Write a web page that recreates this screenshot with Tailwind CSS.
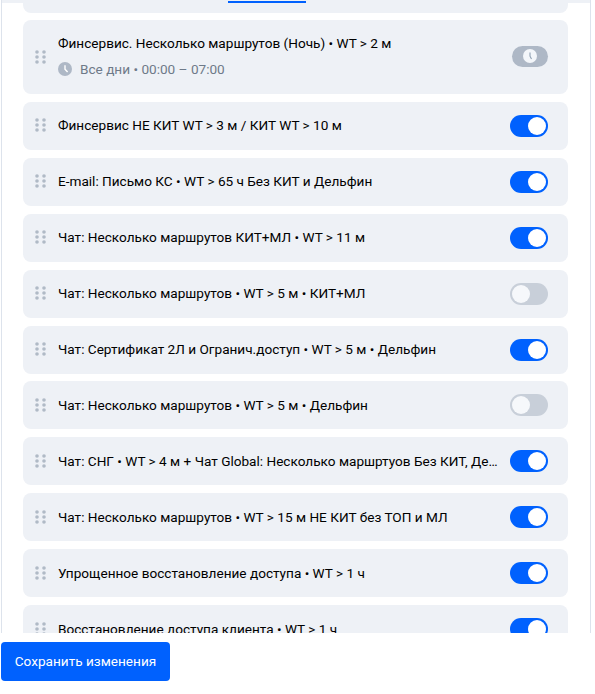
<!DOCTYPE html>
<html><head><meta charset="utf-8"><script src="https://cdn.jsdelivr.net/npm/@tailwindcss/browser@4"></script></head>
<body class="bg-white font-['Roboto',sans-serif] w-[595px] h-[694px] overflow-hidden">
<div class="h-[633px] overflow-hidden ml-px mr-1 border-x border-[#dde3ec] flex flex-col">
  <div class="relative h-[3px] shrink-0 bg-[#eef1f6]"><div class="absolute left-[226px] top-[1px] w-[78px] h-[2px] bg-[#0061fe]"></div></div>
  <div class="flex flex-col gap-2 pl-[21px] pr-[22px]">
    <div class="h-[10px] -mb-[1px] rounded-b-lg bg-[#eef1f6]"></div>

    <div class="h-[74px] rounded-lg bg-[#eef1f6] flex items-center pl-[12px] pr-5">
      <svg class="w-[11px] h-[14px] text-[#b0bac6] shrink-0 mr-3" viewBox="0 0 11 14" fill="currentColor"><circle cx="2" cy="2" r="1.8"/><circle cx="9" cy="2" r="1.8"/><circle cx="2" cy="7" r="1.8"/><circle cx="9" cy="7" r="1.8"/><circle cx="2" cy="12" r="1.8"/><circle cx="9" cy="12" r="1.8"/></svg>
      <div class="flex-1 min-w-0 flex flex-col gap-2 -mt-[2px]">
        <div class="text-[13.6px] leading-[18px] font-[450] text-black truncate">Финсервис. Несколько маршрутов (Ночь) • WT &gt; 2 м</div>
        <div class="flex items-center gap-2 text-[13.6px] leading-[18px] text-[#6e7a89]">
          <svg class="w-[14px] h-[14px] shrink-0" viewBox="0 0 14 14"><circle cx="7" cy="7" r="7" fill="#aeb8c6"/><path d="M7 3.2V7.2L9.6 10" stroke="#fff" stroke-width="1.4" fill="none"/></svg>
          <span>Все дни • 00:00 – 07:00</span>
        </div>
      </div>
      <div class="ml-[7px] w-9 h-[21px] -mt-[2px] rounded-full bg-[#aeb8c6] flex items-center justify-center">
        <svg class="w-[14px] h-[14px]" viewBox="0 0 14 14"><circle cx="7" cy="7" r="7" fill="#f3f6fa"/><path d="M7 3.5V7.2L8.5 10" stroke="#8fa0b2" stroke-width="1.1" fill="none"/></svg>
      </div>
    </div>

    <div class="h-[48px] rounded-lg bg-[#eef1f6] flex items-center pl-[12px] pr-5">
      <svg class="w-[11px] h-[14px] text-[#b0bac6] shrink-0 mr-3 -mt-[2px]" viewBox="0 0 11 14" fill="currentColor"><circle cx="2" cy="2" r="1.8"/><circle cx="9" cy="2" r="1.8"/><circle cx="2" cy="7" r="1.8"/><circle cx="9" cy="7" r="1.8"/><circle cx="2" cy="12" r="1.8"/><circle cx="9" cy="12" r="1.8"/></svg>
      <div class="flex-1 min-w-0 -mt-[2px] text-[13.6px] leading-[18px] font-[450] text-black truncate">Финсервис НЕ КИТ WT &gt; 3 м / КИТ WT &gt; 10 м</div>
      <div class="ml-[7px] shrink-0 w-[38px] h-[22px] rounded-full bg-[#0061fe] flex items-center justify-end p-[2px]"><div class="w-[18px] h-[18px] rounded-full bg-white"></div></div>
    </div>

    <div class="h-[48px] rounded-lg bg-[#eef1f6] flex items-center pl-[12px] pr-5">
      <svg class="w-[11px] h-[14px] text-[#b0bac6] shrink-0 mr-3 -mt-[2px]" viewBox="0 0 11 14" fill="currentColor"><circle cx="2" cy="2" r="1.8"/><circle cx="9" cy="2" r="1.8"/><circle cx="2" cy="7" r="1.8"/><circle cx="9" cy="7" r="1.8"/><circle cx="2" cy="12" r="1.8"/><circle cx="9" cy="12" r="1.8"/></svg>
      <div class="flex-1 min-w-0 -mt-[2px] text-[13.6px] leading-[18px] font-[450] text-black truncate">E-mail: Письмо КС • WT &gt; 65 ч Без КИТ и Дельфин</div>
      <div class="ml-[7px] shrink-0 w-[38px] h-[22px] rounded-full bg-[#0061fe] flex items-center justify-end p-[2px]"><div class="w-[18px] h-[18px] rounded-full bg-white"></div></div>
    </div>

    <div class="h-[48px] rounded-lg bg-[#eef1f6] flex items-center pl-[12px] pr-5">
      <svg class="w-[11px] h-[14px] text-[#b0bac6] shrink-0 mr-3 -mt-[2px]" viewBox="0 0 11 14" fill="currentColor"><circle cx="2" cy="2" r="1.8"/><circle cx="9" cy="2" r="1.8"/><circle cx="2" cy="7" r="1.8"/><circle cx="9" cy="7" r="1.8"/><circle cx="2" cy="12" r="1.8"/><circle cx="9" cy="12" r="1.8"/></svg>
      <div class="flex-1 min-w-0 -mt-[2px] text-[13.6px] leading-[18px] font-[450] text-black truncate">Чат: Несколько маршрутов КИТ+МЛ • WT &gt; 11 м</div>
      <div class="ml-[7px] shrink-0 w-[38px] h-[22px] rounded-full bg-[#0061fe] flex items-center justify-end p-[2px]"><div class="w-[18px] h-[18px] rounded-full bg-white"></div></div>
    </div>

    <div class="h-[48px] rounded-lg bg-[#eef1f6] flex items-center pl-[12px] pr-5">
      <svg class="w-[11px] h-[14px] text-[#b0bac6] shrink-0 mr-3 -mt-[2px]" viewBox="0 0 11 14" fill="currentColor"><circle cx="2" cy="2" r="1.8"/><circle cx="9" cy="2" r="1.8"/><circle cx="2" cy="7" r="1.8"/><circle cx="9" cy="7" r="1.8"/><circle cx="2" cy="12" r="1.8"/><circle cx="9" cy="12" r="1.8"/></svg>
      <div class="flex-1 min-w-0 -mt-[2px] text-[13.6px] leading-[18px] font-[450] text-black truncate">Чат: Несколько маршрутов • WT &gt; 5 м • КИТ+МЛ</div>
      <div class="ml-[7px] shrink-0 w-[38px] h-[22px] rounded-full bg-[#c8cfd9] flex items-center justify-start p-[2px]"><div class="w-[18px] h-[18px] rounded-full bg-[#f6f8fb]"></div></div>
    </div>

    <div class="h-[48px] rounded-lg bg-[#eef1f6] flex items-center pl-[12px] pr-5">
      <svg class="w-[11px] h-[14px] text-[#b0bac6] shrink-0 mr-3 -mt-[2px]" viewBox="0 0 11 14" fill="currentColor"><circle cx="2" cy="2" r="1.8"/><circle cx="9" cy="2" r="1.8"/><circle cx="2" cy="7" r="1.8"/><circle cx="9" cy="7" r="1.8"/><circle cx="2" cy="12" r="1.8"/><circle cx="9" cy="12" r="1.8"/></svg>
      <div class="flex-1 min-w-0 -mt-[2px] text-[13.6px] leading-[18px] font-[450] text-black truncate">Чат: Сертификат 2Л и Огранич.доступ • WT &gt; 5 м • Дельфин</div>
      <div class="ml-[7px] shrink-0 w-[38px] h-[22px] rounded-full bg-[#0061fe] flex items-center justify-end p-[2px]"><div class="w-[18px] h-[18px] rounded-full bg-white"></div></div>
    </div>

    <div class="h-[48px] rounded-lg bg-[#eef1f6] flex items-center pl-[12px] pr-5 -mt-px">
      <svg class="w-[11px] h-[14px] text-[#b0bac6] shrink-0 mr-3" viewBox="0 0 11 14" fill="currentColor"><circle cx="2" cy="2" r="1.8"/><circle cx="9" cy="2" r="1.8"/><circle cx="2" cy="7" r="1.8"/><circle cx="9" cy="7" r="1.8"/><circle cx="2" cy="12" r="1.8"/><circle cx="9" cy="12" r="1.8"/></svg>
      <div class="flex-1 min-w-0 text-[13.6px] leading-[18px] font-[450] text-black truncate">Чат: Несколько маршрутов • WT &gt; 5 м • Дельфин</div>
      <div class="ml-[7px] shrink-0 w-[38px] h-[22px] rounded-full bg-[#c8cfd9] flex items-center justify-start p-[2px]"><div class="w-[18px] h-[18px] rounded-full bg-[#f6f8fb]"></div></div>
    </div>

    <div class="h-[48px] rounded-lg bg-[#eef1f6] flex items-center pl-[12px] pr-5">
      <svg class="w-[11px] h-[14px] text-[#b0bac6] shrink-0 mr-3" viewBox="0 0 11 14" fill="currentColor"><circle cx="2" cy="2" r="1.8"/><circle cx="9" cy="2" r="1.8"/><circle cx="2" cy="7" r="1.8"/><circle cx="9" cy="7" r="1.8"/><circle cx="2" cy="12" r="1.8"/><circle cx="9" cy="12" r="1.8"/></svg>
      <div class="flex-1 min-w-0 text-[13.6px] leading-[18px] font-[450] text-black truncate">Чат: СНГ • WT &gt; 4 м + Чат Global: Несколько маршртуов Без КИТ, Дельфин</div>
      <div class="ml-[7px] shrink-0 w-[38px] h-[22px] rounded-full bg-[#0061fe] flex items-center justify-end p-[2px]"><div class="w-[18px] h-[18px] rounded-full bg-white"></div></div>
    </div>

    <div class="h-[48px] rounded-lg bg-[#eef1f6] flex items-center pl-[12px] pr-5">
      <svg class="w-[11px] h-[14px] text-[#b0bac6] shrink-0 mr-3" viewBox="0 0 11 14" fill="currentColor"><circle cx="2" cy="2" r="1.8"/><circle cx="9" cy="2" r="1.8"/><circle cx="2" cy="7" r="1.8"/><circle cx="9" cy="7" r="1.8"/><circle cx="2" cy="12" r="1.8"/><circle cx="9" cy="12" r="1.8"/></svg>
      <div class="flex-1 min-w-0 text-[13.6px] leading-[18px] font-[450] text-black truncate">Чат: Несколько маршрутов • WT &gt; 15 м НЕ КИТ без ТОП и МЛ</div>
      <div class="ml-[7px] shrink-0 w-[38px] h-[22px] rounded-full bg-[#0061fe] flex items-center justify-end p-[2px]"><div class="w-[18px] h-[18px] rounded-full bg-white"></div></div>
    </div>

    <div class="h-[48px] rounded-lg bg-[#eef1f6] flex items-center pl-[12px] pr-5">
      <svg class="w-[11px] h-[14px] text-[#b0bac6] shrink-0 mr-3" viewBox="0 0 11 14" fill="currentColor"><circle cx="2" cy="2" r="1.8"/><circle cx="9" cy="2" r="1.8"/><circle cx="2" cy="7" r="1.8"/><circle cx="9" cy="7" r="1.8"/><circle cx="2" cy="12" r="1.8"/><circle cx="9" cy="12" r="1.8"/></svg>
      <div class="flex-1 min-w-0 text-[13.6px] leading-[18px] font-[450] text-black truncate">Упрощенное восстановление доступа • WT &gt; 1 ч</div>
      <div class="ml-[7px] shrink-0 w-[38px] h-[22px] rounded-full bg-[#0061fe] flex items-center justify-end p-[2px]"><div class="w-[18px] h-[18px] rounded-full bg-white"></div></div>
    </div>

    <div class="h-[48px] rounded-lg bg-[#eef1f6] flex items-center pl-[12px] pr-5">
      <svg class="w-[11px] h-[14px] text-[#b0bac6] shrink-0 mr-3" viewBox="0 0 11 14" fill="currentColor"><circle cx="2" cy="2" r="1.8"/><circle cx="9" cy="2" r="1.8"/><circle cx="2" cy="7" r="1.8"/><circle cx="9" cy="7" r="1.8"/><circle cx="2" cy="12" r="1.8"/><circle cx="9" cy="12" r="1.8"/></svg>
      <div class="flex-1 min-w-0 text-[13.6px] leading-[18px] font-[450] text-black truncate">Восстановление доступа клиента • WT &gt; 1 ч</div>
      <div class="ml-[7px] shrink-0 w-[38px] h-[22px] rounded-full bg-[#0061fe] flex items-center justify-end p-[2px]"><div class="w-[18px] h-[18px] rounded-full bg-white"></div></div>
    </div>
  </div>
</div>
<div class="pt-[9px] pl-px">
  <button class="w-[169px] h-[39px] rounded bg-[#0061fe] text-white text-[13.6px] font-[450]">Сохранить изменения</button>
</div>
</body></html>
